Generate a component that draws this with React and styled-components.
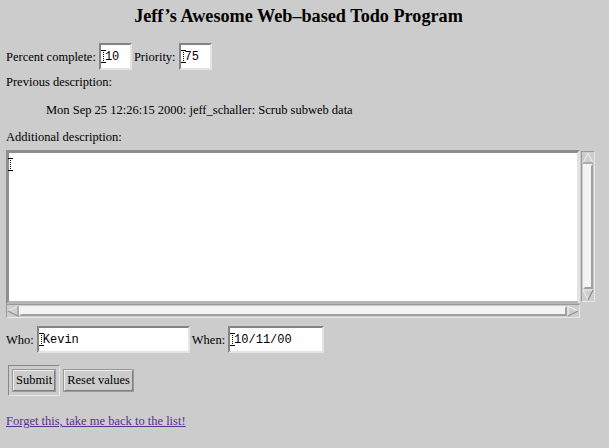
import React from "react";
import styled, { createGlobalStyle } from "styled-components";

const Global = createGlobalStyle`
  html, body { margin: 0; padding: 0; background: #cccccc; }
  body { font-family: "Liberation Serif", "Times New Roman", serif; font-size: 12.5px; color: #000; }
`;

const Page = styled.div`
  padding: 0 6px;
  width: 597px;
  box-sizing: border-box;
`;

const Title = styled.h1`
  margin: 6px 0 0;
  font-size: 18.2px;
  line-height: 20px;
  font-weight: bold;
  text-align: center;
`;

const Row = styled.div`
  display: flex;
  align-items: center;
  margin-top: ${(p) => p.$top}px;
  height: ${(p) => p.$h || 14}px;
  padding-left: ${(p) => p.$indent || 0}px;
  white-space: nowrap;
`;

const Label = styled.span`
  line-height: 14px;
  margin-right: 3px;
`;

const Field = styled.span`
  position: relative;
  display: inline-flex;
  width: ${(p) => p.$w}px;
  height: 27px;
  margin-right: 2px;
  box-sizing: border-box;
  border-style: solid;
  border-width: 2px;
  border-color: #848484 #e4e4e4 #e4e4e4 #848484;
  background: #fff;
`;

const Input = styled.input`
  border: 0;
  outline: 0;
  background: transparent;
  width: 100%;
  padding: 0 0 0 4px;
  margin: 0;
  font-family: "Liberation Mono", "Courier New", monospace;
  font-size: 12px;
  color: #000;
`;

const Caret = styled.span`
  position: absolute;
  left: ${(p) => p.$x || 2}px;
  top: ${(p) => p.$y || 5}px;
  width: 1px;
  height: 13px;
  border-left: 1px dotted #000;
  &::before, &::after {
    content: "";
    position: absolute;
    left: -3px;
    width: 5px;
    height: 1px;
    background: #000;
  }
  &::before { top: 0; }
  &::after { bottom: 0; }
`;

const Editor = styled.div`
  margin-top: 6px;
  display: grid;
  grid-template-columns: 574px 16px;
  grid-template-rows: 154px 14px;
  column-gap: 1px;
  row-gap: 0;
`;

const TextBox = styled.div`
  position: relative;
  box-sizing: border-box;
  border-style: solid;
  border-width: 3px;
  border-color: #8e8e8e #e2e2e2 #b5b5b5 #8e8e8e;
  background: #fff;
`;

const Area = styled.textarea`
  width: 100%;
  height: 100%;
  box-sizing: border-box;
  border: 0;
  outline: 0;
  resize: none;
  overflow: hidden;
  background: transparent;
  font-family: "Liberation Mono", "Courier New", monospace;
  font-size: 12px;
  padding: 4px;
  margin: 0;
  display: block;
`;

const VBar = styled.div`
  box-sizing: border-box;
  margin-top: 1px;
  height: 151px;
  width: 14px;
  border-style: solid;
  border-width: 1px;
  border-color: #9a9a9a #e8e8e8 #e8e8e8 #9a9a9a;
  display: flex;
  flex-direction: column;
  align-items: center;
`;

const HBar = styled.div`
  box-sizing: border-box;
  height: 14px;
  border-style: solid;
  border-width: 1px;
  border-color: #9a9a9a #e8e8e8 #e8e8e8 #9a9a9a;
  display: flex;
  align-items: center;
`;

const Thumb = styled.div`
  flex: 1;
  align-self: stretch;
  box-sizing: border-box;
  border-style: solid;
  border-width: 2px;
  border-color: #f2f2f2 #a0a0a0 #a0a0a0 #f2f2f2;
  background: #f4f4f4;
  margin: ${(p) => (p.$v ? "0 1px" : "1px 0")};
`;

const Arrow = ({ dir }) => {
  const pts = {
    up: "6,1 11,11 1,11",
    down: "1,1 11,1 6,11",
    left: "1,6 11,1 11,11",
    right: "1,1 11,6 1,11",
  }[dir];
  return (
    <svg width="12" height="12" viewBox="0 0 12 12" style={{ flex: "none" }}>
      <polygon points={pts} fill="#cfcfcf" stroke="#f2f2f2" strokeWidth="1" />
      <polyline
        points={
          dir === "up" ? "11,11 1,11" : dir === "down" ? "11,1 6,11" : dir === "left" ? "11,1 11,11 1,6" : "1,11 11,6"
        }
        fill="none"
        stroke="#8a8a8a"
        strokeWidth="1.2"
      />
    </svg>
  );
};

const Corner = styled.div``;

const Buttons = styled.div`
  display: flex;
  align-items: center;
  gap: 3px;
  margin-top: 12px;
  padding-left: 2px;
`;

const DefaultFrame = styled.div`
  box-sizing: border-box;
  padding: 3px;
  border: 1px solid #888;
  border-right-color: #e6e6e6;
  border-bottom-color: #e6e6e6;
`;

const Button = styled.button`
  box-sizing: border-box;
  height: 23px;
  padding: 0 2px;
  margin: 0;
  font-family: "Liberation Serif", "Times New Roman", serif;
  font-size: 12.5px;
  color: #000;
  background: #cccccc;
  border-style: solid;
  border-width: 2px;
  border-color: #ececec #7e7e7e #7e7e7e #ececec;
  outline: 1px solid #9a9a9a;
  outline-offset: -1px;
`;

const Link = styled.a`
  display: inline-block;
  margin-top: 18px;
  color: #5a2f8c;
  text-decoration: underline;
  line-height: 14px;
`;

export default function App() {
  return (
    <>
      <Global />
      <Page>
        <Title>Jeff’s Awesome Web–based Todo Program</Title>
        <Row $top={17} $h={27}>
          <Label>Percent complete:</Label>
          <Field $w={33}>
            <Input readOnly defaultValue="10" />
            <Caret $x={2} />
          </Field>
          <Label>Priority:</Label>
          <Field $w={33}>
            <Input readOnly defaultValue="75" />
            <Caret $x={2} />
          </Field>
        </Row>
        <Row $top={5}>
          <Label>Previous description:</Label>
        </Row>
        <Row $top={14} $indent={40}>
          <Label>Mon Sep 25 12:26:15 2000: jeff_schaller: Scrub subweb data</Label>
        </Row>
        <Row $top={13}>
          <Label>Additional description:</Label>
        </Row>
        <Editor>
          <TextBox>
            <Area readOnly defaultValue="" />
            <Caret $x={1} $y={5} />
          </TextBox>
          <VBar>
            <Arrow dir="up" />
            <Thumb $v />
            <Arrow dir="down" />
          </VBar>
          <HBar>
            <Arrow dir="left" />
            <Thumb />
            <Arrow dir="right" />
          </HBar>
          <Corner />
        </Editor>
        <Row $top={8} $h={27}>
          <Label>Who:</Label>
          <Field $w={153}>
            <Input readOnly defaultValue="Kevin" />
            <Caret $x={2} />
          </Field>
          <Label>When:</Label>
          <Field $w={96}>
            <Input readOnly defaultValue="10/11/00" />
            <Caret $x={2} />
          </Field>
        </Row>
        <Buttons>
          <DefaultFrame>
            <Button>Submit</Button>
          </DefaultFrame>
          <Button>Reset values</Button>
        </Buttons>
        <Link href="#">Forget this, take me back to the list!</Link>
      </Page>
    </>
  );
}
